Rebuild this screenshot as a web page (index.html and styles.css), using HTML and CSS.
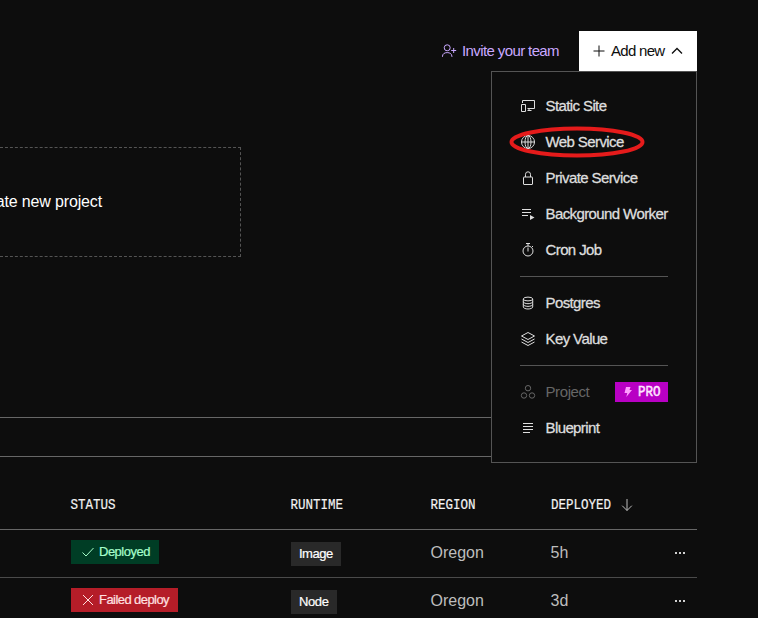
FILE: index.html
```html
<!DOCTYPE html>
<html lang="en">
<head>
<meta charset="utf-8">
<title>Dashboard</title>
<link rel="stylesheet" href="styles.css">
</head>
<body>
<div class="page">
  <header class="topbar">
    <a class="invite">
      <svg class="icon" viewBox="0 0 16 16"><circle cx="6.2" cy="4.8" r="3"/><path d="M1.500 14v-.7c0-2.300 1.900-3.700 4.700-3.700s4.700 1.400 4.700 3.700v.7M10.200 7.500h5M12.700 5v5"/></svg>
      <span>Invite your team</span>
    </a>
    <div class="add">
      <button class="add-button">
        <svg class="plus" viewBox="0 0 12 12"><path d="M6 .5v11M.5 6h11"/></svg>
        <span>Add new</span>
        <svg class="chevron" viewBox="0 0 12 12"><path d="M1 8.500 6 3.500l5 5"/></svg>
      </button>
      <nav class="menu">
        <a class="item"><svg class="icon" viewBox="0 0 16 16"><path d="M2.500 5V2.500h12v8H7.500M9 10.500v2M7.500 12.500h4"/><path d="M1.500 6.500h4v7h-4z"/></svg><span>Static Site</span></a>
        <a class="item"><svg class="icon" viewBox="0 0 16 16"><circle cx="8" cy="8" r="6.500"/><ellipse cx="8" cy="8" rx="3" ry="6.500"/><path d="M8 1.500v13M1.500 8h13"/></svg><span>Web Service</span>
          <svg class="highlight" viewBox="0 0 136 32"><ellipse cx="68" cy="16" rx="65.500" ry="13.500"/></svg></a>
        <a class="item"><svg class="icon" viewBox="0 0 16 16"><rect x="3.500" y="7" width="9" height="7.500" rx=".5"/><path d="M5.500 7V4.300a2.500 2.500 0 0 1 5 0V7"/></svg><span>Private Service</span></a>
        <a class="item"><svg class="icon" viewBox="0 0 16 16"><path d="M2 3.500h9M2 6.500h9M2 9.500h6"/><path class="solid" d="m10 9 4.500 2.500-4.500 2.500z"/></svg><span>Background Worker</span></a>
        <a class="item"><svg class="icon" viewBox="0 0 16 16"><circle cx="8" cy="9" r="5"/><path d="M8 9.500V5.500M6 1.500h4M8 2v2M12 5l1-1"/></svg><span>Cron Job</span></a>
        <hr class="divider">
        <a class="item"><svg class="icon" viewBox="0 0 16 16"><ellipse cx="8" cy="4" rx="4.700" ry="1.900"/><path d="M3.300 4v8c0 1 2.100 2 4.700 2s4.700-1 4.700-2V4M3.300 6.700c0 1 2.100 2 4.700 2s4.700-1 4.700-2M3.300 9.400c0 1 2.100 2 4.700 2s4.700-1 4.700-2"/></svg><span>Postgres</span></a>
        <a class="item"><svg class="icon" viewBox="0 0 16 16"><path d="M8 1.500 14.500 5 8 8.500 1.500 5zM1.500 8 8 11.500 14.500 8M1.500 11 8 14.500 14.500 11"/></svg><span>Key Value</span></a>
        <hr class="divider">
        <a class="item disabled"><svg class="icon" viewBox="0 0 16 16"><circle cx="8" cy="4.200" r="2.700"/><circle cx="4" cy="11.500" r="2.700"/><circle cx="12" cy="11.500" r="2.700"/></svg><span>Project</span>
          <b class="pro"><svg class="bolt" viewBox="0 0 8 10"><path d="M2 0h4.500L5.500 3H8L2.300 10 3.300 6H.5z"/></svg><span class="mono">PRO</span></b></a>
        <a class="item"><svg class="icon" viewBox="0 0 16 16"><path d="M3 3.500h10M3 6.500h10M3 9.500h10M3 12.500h7"/></svg><span>Blueprint</span></a>
      </nav>
    </div>
  </header>
  <section class="projects">
    <div class="new-project"><span>Create new project</span></div>
  </section>
  <section class="filters"></section>
  <section class="services">
    <div class="row head">
      <div class="mono">STATUS</div><div class="mono">RUNTIME</div><div class="mono">REGION</div>
      <div class="sort"><span class="mono">DEPLOYED</span><svg class="arrow" viewBox="0 0 12 14"><path d="M6 1v11.500M1.200 7.700 6 12.500l4.800-4.800"/></svg></div>
    </div>
    <div class="row">
      <div><span class="status ok"><svg class="mark" viewBox="0 0 12 12"><path d="m.5 6.500 3.500 3.500 7.500-8"/></svg><span>Deployed</span></span></div>
      <div><span class="runtime">Image</span></div><div>Oregon</div><div>5h</div>
      <div class="more"><i></i><i></i><i></i></div>
    </div>
    <div class="row">
      <div><span class="status fail"><svg class="mark" viewBox="0 0 12 12"><path d="m1 1 10 10M11 1 1 11"/></svg><span>Failed deploy</span></span></div>
      <div><span class="runtime node">Node</span></div><div>Oregon</div><div>3d</div>
      <div class="more"><i></i><i></i><i></i></div>
    </div>
  </section>
</div>
</body>
</html>
```

FILE: styles.css
```css
* { box-sizing: border-box; }
body {
  margin: 0;
  height: 618px;
  overflow: hidden;
  background: #0d0d0d;
  color: #fff;
  font-family: "Liberation Sans", Arial, sans-serif;
  font-size: 15px;
}
svg { display: block; flex: none; fill: none; stroke: currentColor; stroke-width: 1; overflow: visible; }
.page { width: 697px; }
.topbar {
  display: flex;
  justify-content: flex-end;
  align-items: center;
  gap: 20px;
  height: 71px;
  padding-top: 31px;
}
.invite { display: flex; align-items: center; gap: 5.5px; color: #c9a8ff; letter-spacing: -.61px; white-space: nowrap; }
.invite span, .add-button span, .item > span { padding-bottom: 2px; }
.icon { width: 16px; height: 16px; }
.add { position: relative; }
.add-button {
  display: flex;
  align-items: center;
  width: 118px;
  height: 40px;
  padding: 0 0 0 14px;
  border: 0;
  background: #fff;
  color: #0d0d0d;
  font: inherit;
  letter-spacing: -.7px;
}
.plus { width: 12px; height: 12px; margin-right: 6px; }
.chevron { width: 12px; height: 12px; margin-left: 7px; stroke-width: 1.3; }
.menu {
  position: absolute;
  z-index: 2;
  top: 40px;
  right: 0;
  width: 206px;
  padding: 16px 28px;
  border: 1px solid #545454;
  background: #0d0d0d;
  color: #dedede;
  letter-spacing: -.6px;
}
.item {
  position: relative;
  display: flex;
  align-items: center;
  gap: 9.5px;
  height: 36px;
  white-space: nowrap;
  -webkit-text-stroke: .3px currentColor;
}
.solid { fill: currentColor; stroke: none; }
.disabled { color: #666; letter-spacing: -.4px; -webkit-text-stroke: 0; }
.divider { height: 1px; margin: 8px 0; border: 0; background: #545454; }
.highlight { position: absolute; left: -11.500px; top: 2px; width: 136px; height: 32px; stroke: #e51b1b; stroke-width: 4; }
.pro {
  display: flex;
  align-items: center;
  gap: 6px;
  width: 53px;
  height: 20px;
  margin-left: auto;
  padding-left: 9px;
  background: #b800c4;
  color: #ffe5ff;
}
.pro .mono { -webkit-text-stroke: .5px currentColor; }
.bolt { width: 8px; height: 10px; fill: #ff9cff; stroke: none; }
.mono {
  font: 15px "Liberation Mono", monospace;
  letter-spacing: 0;
  transform: scaleX(.835);
  transform-origin: left;
  -webkit-text-stroke: .2px currentColor;
}
.projects { height: 346px; padding-top: 76px; }
.new-project {
  display: flex;
  align-items: center;
  justify-content: flex-end;
  width: 241px;
  height: 110px;
  padding-right: 138px;
  border: 1px dashed #545454;
  border-left: 0;
  font-size: 16px;
  letter-spacing: -.15px;
  white-space: nowrap;
}
.filters { height: 40px; border: solid #666; border-width: 1px 0; }
.row {
  display: grid;
  grid-template-columns: 220px 140px 120px 125px 22px;
  align-items: center;
  height: 48px;
  padding: 0 0 2px 70px;
  border-bottom: 1px solid #4a4a4a;
  color: #bdbdbd;
  font-size: 16px;
}
.row > div { padding-left: .5px; }
.head { height: 73px; padding-top: 24px; padding-bottom: 0; border-color: #666; color: #f2f2f2; }
.head > .sort { display: flex; align-items: center; }
.arrow { width: 12px; height: 14px; margin-left: -2px; color: #bdbdbd; }
.status, .runtime {
  display: flex;
  align-items: center;
  width: fit-content;
  height: 24px;
  margin-left: .5px;
  font-size: 13px;
  letter-spacing: -.5px;
  white-space: nowrap;
  -webkit-text-stroke: .2px currentColor;
}
.status { gap: 5px; margin-top: -1px; padding: 0 9px 0 11px; }
.status > span { padding-bottom: 1px; }
.ok { background: #003d25; color: #a6ffcb; }
.fail { width: 107px; letter-spacing: -.56px; background: #b51d28; color: #ffe1e1; }
.mark { width: 12px; height: 12px; }
.runtime { margin-top: 3px; padding: 0 8px 1px; background: #292929; color: #fff; }
.node { width: 46px; letter-spacing: -.4px; }
.row > .more { display: flex; gap: 2px; padding: 1px 0 0; }
.more i { width: 2px; height: 2px; background: #d0d0d0; }
```
